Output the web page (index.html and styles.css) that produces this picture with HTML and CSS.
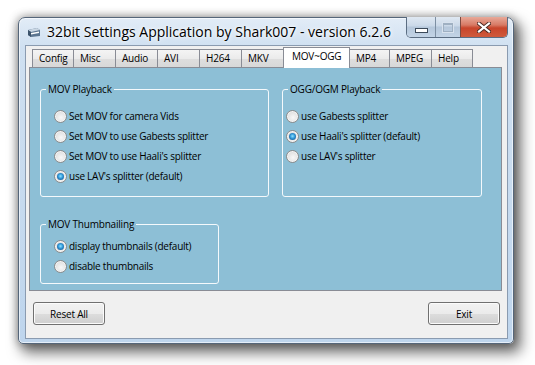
FILE: index.html
```html
<!DOCTYPE html>
<html lang="en">
<head>
    <meta charset="UTF-8">
    <title>32bit Settings Application</title>
    <link rel="stylesheet" href="styles.css">
</head>
<body>

<div class="desk">
    <div class="window">
        <div class="titlebar">
            <svg class="app-icon" width="14" height="11" viewBox="0 0 14 11">
                <path d="M1 3 L10 1 L13 3 L13 9 L4 10 L1 8 Z" fill="#5b7590"/>
                <path d="M1 3 L10 1 L13 3 L4 5 Z" fill="#c9d6e3"/>
                <path d="M4 6 L12 4.5 L12 6 L4 7.5 Z" fill="#ffffff"/>
                <path d="M1 3 L4 5 L4 10 L1 8 Z" fill="#3c536b"/>
            </svg>
            <span class="title">32bit Settings Application by Shark007 - version 6.2.6</span>
            <div class="caption">
                <span class="cbtn cbtn-min"><i></i></span>
                <span class="cbtn cbtn-max"><i></i></span>
                <span class="cbtn cbtn-close">
                    <svg width="14" height="11" viewBox="0 0 14 11">
                        <path d="M2 1.5 L12 9.5 M12 1.5 L2 9.5" stroke="#4a2a22" stroke-width="4" stroke-linecap="square"/>
                        <path d="M2 1.5 L12 9.5 M12 1.5 L2 9.5" stroke="#ffffff" stroke-width="2.2" stroke-linecap="square"/>
                    </svg>
                </span>
            </div>
        </div>

        <div class="client">
            <div class="tabs">
                <div class="tab">Config</div>
                <div class="tab">Misc</div>
                <div class="tab">Audio</div>
                <div class="tab">AVI</div>
                <div class="tab">H264</div>
                <div class="tab tab-mkv">MKV</div>
                <div class="tab selected">MOV~OGG</div>
                <div class="tab tab-mp4">MP4</div>
                <div class="tab">MPEG</div>
                <div class="tab tab-help">Help</div>
            </div>

            <div class="panel">
                <div class="group-row">
                    <fieldset class="group group-mov">
                        <legend>MOV Playback</legend>
                        <div class="options options-mov">
                            <div class="option"><span class="radio"></span>Set MOV for camera Vids</div>
                            <div class="option"><span class="radio"></span>Set MOV to use Gabests splitter</div>
                            <div class="option"><span class="radio"></span>Set MOV to use Haali's splitter</div>
                            <div class="option"><span class="radio checked"></span>use LAV's splitter (default)</div>
                        </div>
                    </fieldset>
                    <fieldset class="group group-ogg">
                        <legend>OGG/OGM Playback</legend>
                        <div class="options options-ogg">
                            <div class="option"><span class="radio"></span>use Gabests splitter</div>
                            <div class="option"><span class="radio checked"></span>use Haali's splitter (default)</div>
                            <div class="option"><span class="radio"></span>use LAV's splitter</div>
                        </div>
                    </fieldset>
                </div>
                <fieldset class="group group-thumb">
                    <legend>MOV Thumbnailing</legend>
                    <div class="options options-thumb">
                        <div class="option"><span class="radio checked"></span>display thumbnails (default)</div>
                        <div class="option"><span class="radio"></span>disable thumbnails</div>
                    </div>
                </fieldset>
            </div>

            <div class="buttons">
                <button type="button" class="win-button">Reset All</button>
                <button type="button" class="win-button">Exit</button>
            </div>
        </div>
    </div>
</div>

</body>
</html>
```

FILE: styles.css
```css
html,
body {
    height: 100%;
}

body {
    margin: 0;
    background-color: #ffffff;
    font-family: "Open Sans", "Noto Sans", sans-serif;
    color: #000000;
}

.desk {
    box-sizing: border-box;
    height: 365px;
    padding: 17px 0 0 18px;
}

.window {
    box-sizing: border-box;
    width: 496px;
    height: 327px;
    display: flex;
    flex-direction: column;
    padding: 0 5px 4px 6px;
    border: 1px solid #55667a;
    border-radius: 7px 7px 5px 5px;
    background: linear-gradient(180deg, #e2ecf7 0%, #cfe0f1 30px, #bed5ed 100%);
    box-shadow: inset 0 0 0 1px rgba(255, 255, 255, 0.6), 5px 7px 14px 2px rgba(0, 0, 0, 0.55), 0 0 8px 1px rgba(0, 0, 0, 0.3);
}

/* title bar */
.titlebar {
    height: 27px;
    display: flex;
    align-items: flex-start;
}

.app-icon {
    margin: 9px 0 0 2px;
    flex-shrink: 0;
}

.title {
    margin-left: 6px;
    font-size: 14px;
    line-height: 27px;
    white-space: nowrap;
    text-shadow: 0 0 6px #ffffff, 0 0 3px #ffffff;
}

.caption {
    margin-left: auto;
    margin-top: -1px;
    display: flex;
    height: 21px;
    border: 1px solid #5b6d82;
    border-top: none;
    border-radius: 0 0 5px 5px;
    overflow: hidden;
    box-sizing: border-box;
}

.cbtn {
    box-sizing: border-box;
    height: 20px;
    display: flex;
    align-items: center;
    justify-content: center;
    background: linear-gradient(180deg, #dfe8f2 0%, #cad8e8 45%, #b5c7db 50%, #c3d4e6 100%);
}

.cbtn-min {
    width: 29px;
    border-right: 1px solid #7d8fa3;
}

.cbtn-min i {
    display: block;
    width: 11px;
    height: 3px;
    margin-top: 6px;
    background-color: #ffffff;
    border: 1px solid #3c4a5a;
}

.cbtn-max {
    width: 25px;
    border-right: 1px solid #7d4a40;
}

.cbtn-max i {
    display: block;
    width: 8px;
    height: 6px;
    border: 1px solid #9fb0c2;
    border-top-width: 2px;
    box-shadow: 0 0 0 1px #d8e2ee;
}

.cbtn-close {
    width: 46px;
    background: linear-gradient(180deg, #e8a999 0%, #d77a64 40%, #c8452b 55%, #cf5a3c 100%);
}

/* client area */
.client {
    box-sizing: border-box;
    width: 483px;
    height: 294px;
    border: 1px solid #8a9bb0;
    background-color: #f0f0f0;
    display: flex;
    flex-direction: column;
}

.tabs {
    display: flex;
    align-items: flex-end;
    height: 20px;
    margin-top: 1px;
    padding-left: 6px;
    position: relative;
    z-index: 1;
}

.tab {
    box-sizing: border-box;
    width: 43px;
    height: 18px;
    margin-left: -1px;
    padding-left: 6px;
    border: 1px solid #898c95;
    border-bottom: none;
    background: linear-gradient(180deg, #f4f4f4 0%, #ebebeb 50%, #dedede 51%, #d8d8d8 100%);
    font-size: 10px;
    letter-spacing: -0.2px;
    line-height: 16px;
    white-space: nowrap;
}

.tab:first-child {
    margin-left: 0;
    width: 42px;
}

.tab-mkv {
    width: 44px;
}

.tab-mp4 {
    width: 41px;
}

.tab-help {
    width: 42px;
}

.tab.selected {
    width: 67px;
    height: 21px;
    margin-left: -2px;
    margin-bottom: -1px;
    padding-left: 8px;
    background: #ffffff;
    line-height: 17px;
    position: relative;
    z-index: 2;
}

.panel {
    box-sizing: border-box;
    width: 473px;
    height: 224px;
    margin-left: 3px;
    border: 1px solid #898c95;
    background-color: #8dbfd6;
    padding: 14px 0 0 10px;
}

.group-row {
    display: flex;
    gap: 13px;
}

.group {
    box-sizing: border-box;
    margin: 0;
    padding: 0;
    min-width: 0;
    border: 1px solid #f4f9fc;
    border-radius: 3px;
}

.group legend {
    margin-left: 5px;
    padding: 0 2px;
    font-size: 10px;
    letter-spacing: -0.2px;
    line-height: 14px;
}

.group-mov {
    width: 229px;
    height: 115px;
}

.group-ogg {
    width: 200px;
    height: 115px;
}

.group-thumb {
    width: 179px;
    height: 67px;
    margin-top: 20px;
}

.options-mov {
    padding: 10px 0 0 13px;
}

.options-ogg {
    padding: 10px 0 0 3px;
}

.options-thumb {
    padding: 5px 0 0 13px;
}

.option {
    display: flex;
    align-items: center;
    height: 20px;
    font-size: 10px;
    letter-spacing: -0.25px;
    white-space: nowrap;
}

.radio {
    box-sizing: border-box;
    width: 13px;
    height: 13px;
    margin-right: 2px;
    border: 1px solid #8b8c8c;
    border-radius: 50%;
    background: radial-gradient(circle at 55% 60%, #f8f8f8 0%, #e4e4e4 55%, #cfcfcf 100%);
    box-shadow: inset 0 0 0 1px #f4f4f4;
    display: flex;
    align-items: center;
    justify-content: center;
}

.radio.checked::after {
    content: "";
    width: 7px;
    height: 7px;
    border-radius: 50%;
    background: radial-gradient(circle at 50% 45%, #8fe2ff 0%, #2f95d6 45%, #0f3f74 100%);
}

/* bottom buttons */
.buttons {
    display: flex;
    justify-content: space-between;
    padding: 11px 7px 0 7px;
}

.win-button {
    box-sizing: border-box;
    width: 72px;
    height: 23px;
    padding: 0;
    border: 1px solid #707070;
    border-radius: 3px;
    background: linear-gradient(180deg, #f2f2f2 0%, #ebebeb 50%, #dddddd 51%, #cfcfcf 100%);
    box-shadow: inset 0 0 0 1px #fbfbfb;
    font-family: "Open Sans", "Noto Sans", sans-serif;
    font-size: 10px;
    letter-spacing: -0.2px;
    color: #000000;
}
```
